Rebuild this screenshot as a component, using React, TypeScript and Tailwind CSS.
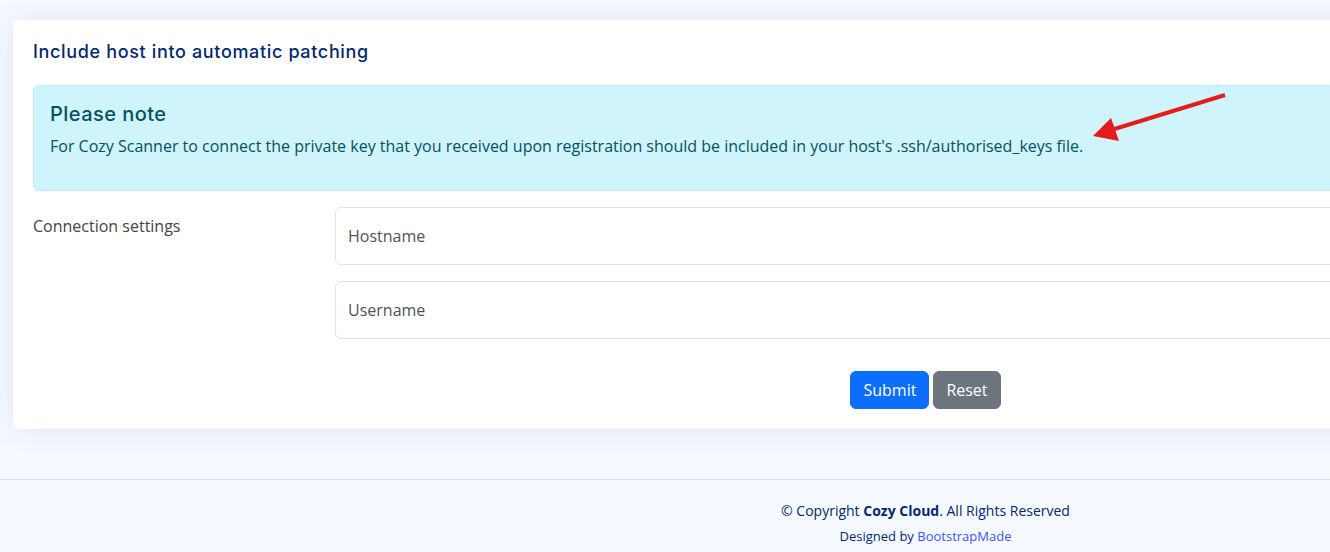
import React from "react";

export default function App() {
  return (
    <div className="w-[1330px] h-[552px] overflow-hidden bg-[#f6f9ff] relative" style={{ fontFamily: '"Open Sans", "Noto Sans", sans-serif' }}>
      <div className="w-[1851px]">
        <main className="px-[13px] pt-[20px] pb-[50px]">
          <div className="bg-white rounded-[5px] shadow-[0_0_30px_rgba(1,41,112,0.1)] px-[20px] pb-[20px]">
            <h5 className="pt-[21px] pb-[22px] text-[18px] leading-[22px] font-medium text-[#012970] tracking-[0.65px]" style={{ fontFamily: 'Inter, "Noto Sans", sans-serif' }}>
              Include host into automatic patching
            </h5>
            <div className="relative bg-[#cff4fc] border border-[#b6effb] rounded-[6px] p-[16px] text-[#055160] mb-[16px]">
              <h4 className="text-[20px] leading-[24px] font-medium mb-[8px] tracking-[0.45px]" style={{ fontFamily: 'Inter, "Noto Sans", sans-serif' }}>
                Please note
              </h4>
              <p className="text-[16px] leading-[24px] mb-[16px]">
                For Cozy Scanner to connect the private key that you received upon registration should be included in your host's .ssh/authorised_keys file.
              </p>
            </div>
            <div className="grid grid-cols-[302px_1fr] text-[16px] leading-[24px]">
              <div className="pt-[7px] text-[#444444]">Connection settings</div>
              <div className="flex flex-col gap-[16px]">
                <div className="h-[58px] border border-[#dee2e6] rounded-[6px] bg-white flex items-center px-[12px] text-[#4f5256]">
                  Hostname
                </div>
                <div className="h-[58px] border border-[#dee2e6] rounded-[6px] bg-white flex items-center px-[12px] text-[#4f5256]">
                  Username
                </div>
              </div>
            </div>
            <div className="mt-[32px] flex justify-center gap-[4px] text-[16px] leading-[24px]">
              <button className="h-[38px] px-[12px] rounded-[6px] bg-[#0d6efd] border border-[#0d6efd] text-white">Submit</button>
              <button className="h-[38px] px-[12px] rounded-[6px] bg-[#6c757d] border border-[#6c757d] text-white">Reset</button>
            </div>
          </div>
        </main>
        <footer className="border-t border-[#cddfff] pt-[20px] text-center text-[#012970]">
          <div className="text-[14px] leading-[21px]">
            © Copyright <strong className="font-bold">Cozy Cloud</strong>. All Rights Reserved
          </div>
          <div className="text-[13px] leading-[20px] mt-[5px]">
            Designed by <span className="text-[#4154f1]">BootstrapMade</span>
          </div>
        </footer>
      </div>
      <svg className="absolute left-0 top-0 pointer-events-none" width="1330" height="552">
        <line x1="1225" y1="95" x2="1108" y2="131" stroke="#e41c1c" strokeWidth="4" strokeLinecap="butt" />
        <polygon points="1093,136 1111,118 1119,141" fill="#e41c1c" />
      </svg>
    </div>
  );
}
